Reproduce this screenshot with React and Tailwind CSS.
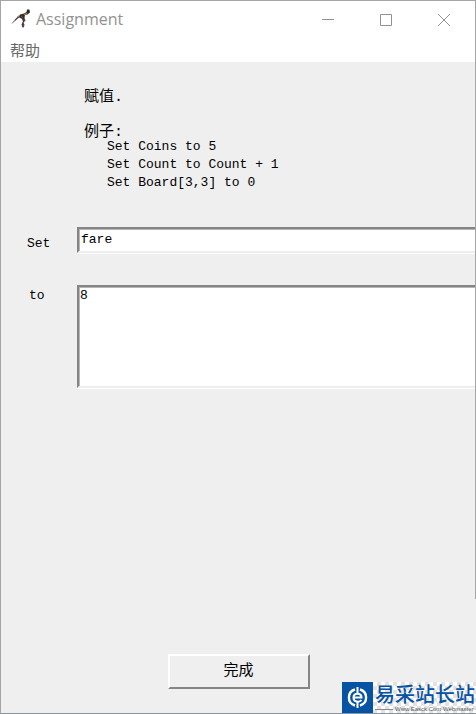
import React, { useState } from "react";

const ejemplos = ["Set Coins to 5", "Set Count to Count + 1", "Set Board[3,3] to 0"];

const bevelIn = "border-t-2 border-l-2 border-b-2 border-t-[#858585] border-l-[#858585] border-b-[#eeeeee] bg-white shadow-[inset_1px_1px_0_#b5b5b5,0_1px_0_#ffffff] outline-none";

function AppIcon() {
    return (
        <svg width="20" height="20" viewBox="0 0 20 20" fill="none" aria-hidden="true">
            <path d="M1 14.500L3 11.500L6 8.500L9 5.500L13 4.500L15.500 3L16 .5H18.500L19 3.500L16.500 5.500L14 6L13.500 9L14.500 11.500L12.500 13.500L13.500 16L12.500 18.500H11.500L10.500 15.500L12 12L10.500 9.500L8 8.500L4 12Z" fill="#3b3029" />
            <path d="M1 14.500L4 11M6 8L9 6.500" stroke="#a89a88" />
            <path d="M10 7L12 9M11.500 14L12.500 17" stroke="#7b3f8f" />
            <path d="M13 5.500L16 4.500M13 10.500L14 11.500" stroke="#c48f48" />
            <path d="M17 1.500V3" stroke="#111111" />
        </svg>
    );
}

function WindowButtons() {
    return (
        <div className="flex h-9 items-center gap-10 pt-px pr-[22px] text-[#929292]">
            <button type="button" aria-label="Minimize" className="flex h-5 w-[18px] items-center justify-center">
                <svg width="12" height="12" viewBox="0 0 12 12"><path d="M0 5.5H12" stroke="currentColor" /></svg>
            </button>
            <button type="button" aria-label="Maximize" className="flex h-5 w-[18px] items-center justify-center">
                <svg width="12" height="12" viewBox="0 0 12 12"><path d="M.5 .5H11.5V11.5H.5Z" stroke="currentColor" fill="none" /></svg>
            </button>
            <button type="button" aria-label="Close" className="flex h-5 w-[18px] items-center justify-center">
                <svg width="12" height="12" viewBox="0 0 12 12"><path d="M0 0L12 12M12 0L0 12" stroke="currentColor" /></svg>
            </button>
        </div>
    );
}

function SiteBadge() {
    return (
        <div className="absolute right-0 bottom-0 flex h-[31px] w-[134px] bg-white">
            <div className="flex h-[31px] w-[31px] shrink-0 items-center justify-center bg-[#0753a3]">
                <svg width="21" height="21" viewBox="0 0 21 21" fill="none" stroke="#fff" strokeWidth="2.400" aria-hidden="true">
                    <path d="M8 2.500A8.300 8.300 0 0 0 8 18.500M13 2.500A8.300 8.300 0 0 1 13 18.500" />
                    <path d="M10.500 0V6M10.500 15V21" strokeWidth="2" />
                    <path d="M6.500 10.500H14.500C14.500 5.500 6.500 5.500 6.500 10.500C6.500 15.500 12.500 15.500 14.500 13" strokeWidth="2" />
                </svg>
            </div>
            <div className="flex-1 bg-[repeating-conic-gradient(#e2e2e2_0_25%,#ffffff_0_50%)] bg-size-[8px_8px] pl-0.5 font-['Noto_Sans_CJK_SC',sans-serif] whitespace-nowrap">
                <p className="text-[20px] leading-[24px] font-medium text-[#0753a3]">易采站长站</p>
                <p className="flex items-center gap-0.5 font-['Liberation_Sans',sans-serif] text-[6px] leading-[6px] text-[#555555]">
                    <span className="h-px w-[18px] bg-[#888888]" />
                    Www.Easck.Com Webmaster
                </p>
            </div>
        </div>
    );
}

export default function App() {
    const [variable, setVariable] = useState("fare");
    const [valor, setValor] = useState("8");

    return (
        <div className="relative flex min-h-screen flex-col border-t border-b border-l border-t-[#a5a5a5] border-b-[#8795a0] border-l-[#a5a5a5] bg-[#efefef] font-['Liberation_Mono','Noto_Sans_CJK_SC',monospace] text-[13px] text-black">
            <div className="flex flex-1 flex-col border-r border-[#a5a5a5]">
                <header className="bg-white font-['Open_Sans','Noto_Sans_CJK_SC',sans-serif]">
                    <div className="flex items-center justify-between">
                        <div className="flex items-center gap-[5px] pl-[10px]">
                            <AppIcon />
                            <h1 className="text-[16px] text-[#929292]">Assignment</h1>
                        </div>
                        <WindowButtons />
                    </div>
                    <nav className="flex h-[25px] items-start pl-[9px]">
                        <button type="button" className="text-[15px] leading-[26px] text-[#686868]">帮助</button>
                    </nav>
                </header>

                <section className="pt-[25px] pl-[83px]">
                    <p className="text-[15px] leading-[22px]">赋值.</p>
                    <p className="mt-[13px] text-[15px] leading-[22px]">例子:</p>
                    <ul className="-mt-[6px] pl-[23px] leading-[18px]">
                        {ejemplos.map((linea) => (
                            <li key={linea}>{linea}</li>
                        ))}
                    </ul>
                </section>

                <form className="mt-[35px] flex flex-col gap-8">
                    <div className="flex items-start">
                        <label htmlFor="variable" className="w-[76px] pt-2 pl-[26px] leading-[18px]">Set</label>
                        <input
                            id="variable"
                            value={variable}
                            onChange={(e) => setVariable(e.target.value)}
                            className={`h-[26px] min-w-0 flex-1 pb-[2px] pl-[2px] ${bevelIn}`}
                        />
                    </div>
                    <div className="flex items-start">
                        <label htmlFor="valor" className="w-[76px] pt-[2px] pl-7 leading-[18px]">to</label>
                        <textarea
                            id="valor"
                            value={valor}
                            onChange={(e) => setValor(e.target.value)}
                            className={`h-[103px] min-w-0 flex-1 resize-none pl-px leading-[18px] ${bevelIn}`}
                        />
                    </div>
                </form>
            </div>

            <footer className="flex h-[114px] items-start justify-center pt-[55px]">
                <button type="button" className="h-[35px] w-[142px] border-2 border-t-white border-r-[#858585] border-b-[#858585] border-l-white pt-0.5 text-[15px]">
                    完成
                </button>
            </footer>
            <SiteBadge />
        </div>
    );
}
